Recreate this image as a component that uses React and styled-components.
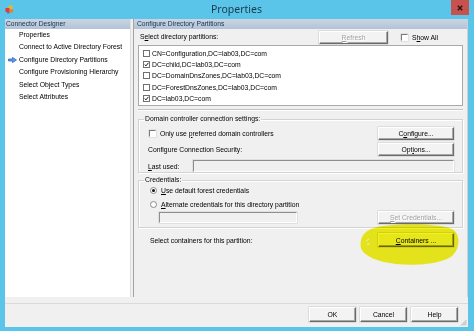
import React from "react";
import styled, { createGlobalStyle, css } from "styled-components";

const GlobalStyle = createGlobalStyle`
  html, body {
    margin: 0;
    padding: 0;
    background: #5bc5e9;
  }
  * {
    box-sizing: border-box;
  }
`;

const uiFont = `"Liberation Sans", Arial, sans-serif`;

const Window = styled.div`
  width: 474px;
  height: 331px;
  background: #5bc5e9;
  display: flex;
  flex-direction: column;
  padding: 0 6px 4px 5px;
  font-family: ${uiFont};
  font-size: 6.8px;
  color: #000;
  overflow: hidden;
`;

const TitleBar = styled.div`
  height: 19px;
  display: grid;
  grid-template-columns: 1fr auto 1fr;
  align-items: start;
`;

const AppIcon = styled.svg`
  margin-top: 5px;
  width: 9px;
  height: 9px;
`;

const Title = styled.div`
  font-family: "Noto Sans", "Open Sans", sans-serif;
  font-size: 10.5px;
  line-height: 19px;
  color: #1b3a4b;
`;

const CloseButton = styled.div`
  justify-self: end;
  margin-right: -1px;
  width: 18px;
  height: 15px;
  background: #c7514c;
  display: flex;
  align-items: center;
  justify-content: center;
`;

const Dialog = styled.div`
  flex: 1;
  background: #f0f0f0;
  display: flex;
  flex-direction: column;
`;

const Main = styled.div`
  height: 278px;
  display: flex;
`;

const LeftPane = styled.div`
  width: 125px;
  display: flex;
  flex-direction: column;
`;

const PaneHeader = styled.div`
  height: 10px;
  line-height: 10px;
  font-size: 6.7px;
  color: #1d2f4c;
  padding-left: ${(p) => p.$indent || 1}px;
  background: linear-gradient(#c9d5e3, #b3c3d7);
  white-space: nowrap;
`;

const NavList = styled.div`
  flex: 1;
  background: #fff;
`;

const NavItem = styled.div`
  height: 12.4px;
  line-height: 12.4px;
  padding-left: 14px;
  position: relative;
  white-space: nowrap;
`;

const NavArrow = styled.svg`
  position: absolute;
  left: 3px;
  top: 3.5px;
  width: 9px;
  height: 6px;
`;

const Splitter = styled.div`
  width: 4px;
  border-left: 1px solid #dedede;
  border-right: 1px solid #a3a3a3;
`;

const RightPane = styled.div`
  flex: 1;
  display: flex;
  flex-direction: column;
  position: relative;
  border-right: 1px solid #d0d0d0;
`;

const PaneBody = styled.div`
  flex: 1;
  padding: 0 4px 0 4px;
  display: flex;
  flex-direction: column;
`;

const TopRow = styled.div`
  height: 16px;
  display: flex;
  align-items: center;
`;

const TopLabel = styled.span`
  flex: 1;
  padding-left: 2px;
  padding-bottom: 1px;
`;

const Key = styled.span`
  text-decoration: underline;
`;

const Button = styled.div`
  width: ${(p) => p.$w || 76}px;
  height: ${(p) => p.$h || 13}px;
  flex: none;
  display: flex;
  align-items: center;
  justify-content: center;
  background: #f3f3f3;
  border-top: 1px solid #fff;
  border-left: 1px solid #fff;
  border-right: 1px solid #6b6b6b;
  border-bottom: 1px solid #6b6b6b;
  box-shadow: inset -1px -1px 0 #a8a8a8, 0 0 0 0.5px #c8c8c8;
  white-space: nowrap;
  ${(p) =>
    p.$disabled &&
    css`
      color: #a2a2a2;
      text-shadow: 1px 1px 0 #fff;
    `}
`;

const ShowAll = styled.label`
  width: 75px;
  padding-left: 13px;
  display: flex;
  align-items: center;
  gap: 4px;
`;

const ClassicCheck = styled.span`
  width: 7px;
  height: 7px;
  flex: none;
  background: #fff;
  border-top: 1px solid #7a7a7a;
  border-left: 1px solid #7a7a7a;
  border-right: 1px solid #fff;
  border-bottom: 1px solid #fff;
  box-shadow: 0 0 0 0.5px #d0d0d0;
`;

const ListBox = styled.div`
  height: 61px;
  background: #fff;
  border: 1px solid #a9a9a9;
  padding: 2px 0 0 4px;
`;

const ListItem = styled.div`
  height: 11.2px;
  display: flex;
  align-items: center;
  gap: 2px;
  white-space: nowrap;
`;

const ListCheck = styled.span`
  width: 7px;
  height: 7px;
  flex: none;
  border: 1px solid #6f6f6f;
  background: #fff;
  display: flex;
  align-items: center;
  justify-content: center;
`;

const Rule = styled.div`
  margin-top: 3px;
  height: 2px;
  border-top: 1px solid #c4c4c4;
  border-bottom: 1px solid #fff;
`;

const Group = styled.fieldset`
  margin: ${(p) => p.$top}px 0 0 0;
  padding: 0 8px 0 9px;
  border: 1px solid #d3d3d3;
  box-shadow: inset 1px 1px 0 #fff, 1px 1px 0 #fff;
  height: ${(p) => p.$h}px;
  min-width: 0;
`;

const Legend = styled.legend`
  padding: 0 1px;
  margin-left: -4px;
  line-height: 8px;
  font-size: 6.8px;
`;

const GroupRow = styled.div`
  display: flex;
  align-items: center;
  height: ${(p) => p.$h || 12}px;
  margin-top: ${(p) => p.$top || 0}px;
  white-space: nowrap;
`;

const RowLabel = styled.span`
  flex: 1;
  display: flex;
  align-items: center;
  gap: 4px;
  padding-left: ${(p) => p.$indent || 0}px;
`;

const FieldLabel = styled.span`
  width: 45px;
  flex: none;
`;

const TextField = styled.div`
  height: ${(p) => p.$h || 12}px;
  width: ${(p) => (p.$w ? `${p.$w}px` : "auto")};
  flex: ${(p) => (p.$w ? "none" : 1)};
  margin-left: ${(p) => p.$left || 0}px;
  background: #f0f0f0;
  border-top: 1px solid #8d8d8d;
  border-left: 1px solid #8d8d8d;
  border-right: 1px solid #fff;
  border-bottom: 1px solid #fff;
  box-shadow: 0 0 0 0.5px #cfcfcf;
`;

const Radio = styled.span`
  width: 7px;
  height: 7px;
  flex: none;
  margin-left: 2px;
  border-radius: 50%;
  background: #fff;
  border: 1px solid #8a8a8a;
  display: flex;
  align-items: center;
  justify-content: center;
  &::after {
    content: "";
    width: 3px;
    height: 3px;
    border-radius: 50%;
    background: ${(p) => (p.$checked ? "#111" : "transparent")};
  }
`;

const ContainersRow = styled.div`
  margin-top: 5px;
  height: 14px;
  display: flex;
  align-items: center;
  padding: 0 9px 0 12px;
  white-space: nowrap;
`;

const Highlight = styled.svg`
  position: absolute;
  left: 226px;
  top: 205px;
  width: 100px;
  height: 42px;
  mix-blend-mode: multiply;
  pointer-events: none;
`;

const Footer = styled.div`
  flex: 1;
  margin-top: 6px;
  border-top: 1px solid #dadada;
  display: flex;
  justify-content: flex-end;
  align-items: flex-start;
  gap: 4px;
  padding: 3px 10px 0 0;
  position: relative;
`;

const Grip = styled.svg`
  position: absolute;
  right: 1px;
  bottom: 1px;
  width: 7px;
  height: 7px;
`;

const Check = () => (
  <svg width="5" height="5" viewBox="0 0 5 5">
    <path d="M0.6 2.5 L2 3.9 L4.4 0.8" fill="none" stroke="#1a1a1a" strokeWidth="1" />
  </svg>
);

const partitions = [
  { name: "CN=Configuration,DC=lab03,DC=com", checked: false },
  { name: "DC=child,DC=lab03,DC=com", checked: true },
  { name: "DC=DomainDnsZones,DC=lab03,DC=com", checked: false },
  { name: "DC=ForestDnsZones,DC=lab03,DC=com", checked: false },
  { name: "DC=lab03,DC=com", checked: true },
];

const steps = [
  "Properties",
  "Connect to Active Directory Forest",
  "Configure Directory Partitions",
  "Configure Provisioning Hierarchy",
  "Select Object Types",
  "Select Attributes",
];

export default function App() {
  return (
    <>
      <GlobalStyle />
      <Window>
        <TitleBar>
          <AppIcon viewBox="0 0 9 9">
            <rect x="3.5" y="0.5" width="4" height="3.5" fill="#f3b51c" />
            <rect x="0.5" y="3" width="4" height="4" fill="#e8392c" />
            <rect x="4.5" y="4.5" width="3.5" height="3" fill="#f07c1e" />
            <rect x="2" y="6.5" width="2.5" height="2" fill="#8c5bb5" />
          </AppIcon>
          <Title>Properties</Title>
          <CloseButton>
            <svg width="6" height="6" viewBox="0 0 6 6">
              <path d="M0.8 0.8 L5.2 5.2 M5.2 0.8 L0.8 5.2" stroke="#2a1414" strokeWidth="1.4" />
            </svg>
          </CloseButton>
        </TitleBar>
        <Dialog>
          <Main>
            <LeftPane>
              <PaneHeader>Connector Designer</PaneHeader>
              <NavList>
                {steps.map((s, i) => (
                  <NavItem key={s}>
                    {i === 2 && (
                      <NavArrow viewBox="0 0 9 6">
                        <path
                          d="M0.5 2 H4.5 V0.4 L8.5 3 L4.5 5.6 V4 H0.5 Z"
                          fill="#5b9be8"
                          stroke="#1f5bb8"
                          strokeWidth="0.7"
                        />
                      </NavArrow>
                    )}
                    {s}
                  </NavItem>
                ))}
              </NavList>
            </LeftPane>
            <Splitter />
            <RightPane>
              <PaneHeader $indent={3}>Configure Directory Partitions</PaneHeader>
              <PaneBody>
                <TopRow>
                  <TopLabel>
                    S<Key>e</Key>lect directory partitions:
                  </TopLabel>
                  <Button $w={69} $h={13} $disabled>
                    <Key>R</Key>efresh
                  </Button>
                  <ShowAll>
                    <ClassicCheck />
                    <span>
                      S<Key>h</Key>ow All
                    </span>
                  </ShowAll>
                </TopRow>
                <ListBox>
                  {partitions.map((p) => (
                    <ListItem key={p.name}>
                      <ListCheck>{p.checked && <Check />}</ListCheck>
                      {p.name}
                    </ListItem>
                  ))}
                </ListBox>
                <Rule />
                <Group $top={4} $h={58}>
                  <Legend>Domain controller connection settings:</Legend>
                  <GroupRow $top={4}>
                    <RowLabel $indent={1}>
                      <ClassicCheck />
                      <span>
                        Only use <Key>p</Key>referred domain controllers
                      </span>
                    </RowLabel>
                    <Button>
                      C<Key>o</Key>nfigure...
                    </Button>
                  </GroupRow>
                  <GroupRow $top={4}>
                    <RowLabel>Configure Connection Security:</RowLabel>
                    <Button>
                      Opt<Key>i</Key>ons...
                    </Button>
                  </GroupRow>
                  <GroupRow $top={5}>
                    <FieldLabel>
                      <Key>L</Key>ast used:
                    </FieldLabel>
                    <TextField $h={12} />
                  </GroupRow>
                </Group>
                <Group $top={3} $h={52}>
                  <Legend>Credentials:</Legend>
                  <GroupRow>
                    <RowLabel>
                      <Radio $checked />
                      <span>
                        <Key>U</Key>se default forest credentials
                      </span>
                    </RowLabel>
                  </GroupRow>
                  <GroupRow $top={2}>
                    <RowLabel>
                      <Radio />
                      <span>
                        <Key>A</Key>lternate credentials for this directory partition
                      </span>
                    </RowLabel>
                  </GroupRow>
                  <GroupRow $h={14}>
                    <TextField $w={138} $h={11} $left={11} />
                    <RowLabel />
                    <Button $disabled>
                      <Key>S</Key>et Credentials...
                    </Button>
                  </GroupRow>
                </Group>
                <ContainersRow>
                  <RowLabel>Select containers for this partition:</RowLabel>
                  <Button $h={14}>
                    <Key>C</Key>ontainers ...
                  </Button>
                </ContainersRow>
              </PaneBody>
              <Highlight viewBox="0 0 100 42">
                <path
                  d="M14 4 C30 -1 78 -1 92 5 C101 10 100 24 93 31 C84 40 56 42 36 40 C20 38 4 33 1 24 C-1 14 4 7 14 4 Z"
                  fill="#f3f21c"
                />
                <path d="M6 17 L9 15 M7 20 L10 20" stroke="#fbfbd8" strokeWidth="1" />
              </Highlight>
            </RightPane>
          </Main>
          <Footer>
            <Button $w={47} $h={15}>
              OK
            </Button>
            <Button $w={47} $h={15}>
              Cancel
            </Button>
            <Button $w={47} $h={15}>
              Help
            </Button>
            <Grip viewBox="0 0 7 7">
              <path d="M6.5 1 L1 6.5 M6.5 3 L3 6.5 M6.5 5 L5 6.5" stroke="#a0a0a0" strokeWidth="0.8" />
            </Grip>
          </Footer>
        </Dialog>
      </Window>
    </>
  );
}
